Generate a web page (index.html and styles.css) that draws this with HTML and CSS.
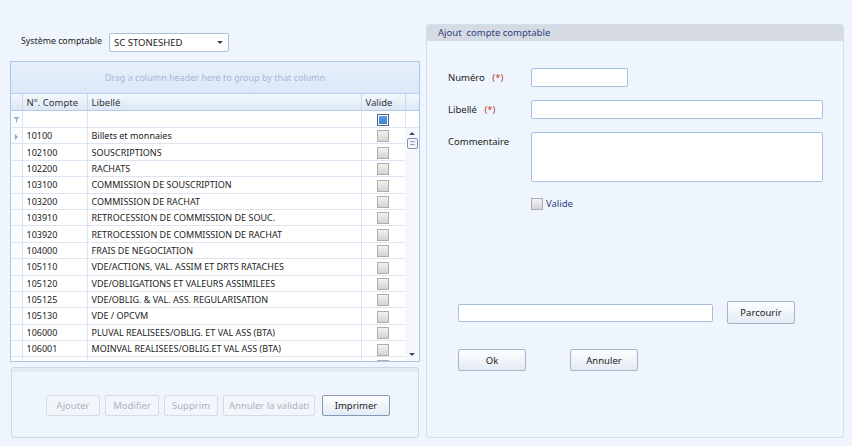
FILE: index.html
```html
<!DOCTYPE html>
<html lang="fr">
<head>
  <meta charset="UTF-8">
  <title>Comptes comptables</title>
  <link rel="stylesheet" href="styles.css">
</head>
<body>
  <div class="page">

    <div class="left">
      <div class="system-row">
        <span class="system-label">Système comptable</span>
        <div class="combo">
          <span>SC STONESHED</span>
          <span class="combo-arrow"></span>
        </div>
      </div>

      <div class="grid">
        <div class="group-panel">Drag a column header here to group by that column</div>

        <table class="grid-table">
          <colgroup>
            <col class="c-ind"><col class="c-num"><col class="c-lib"><col class="c-val"><col class="c-end">
          </colgroup>
          <tr class="head-row">
            <th></th><th>N°. Compte</th><th>Libellé</th><th>Valide</th><th></th>
          </tr>
          <tr class="filter-row">
            <td class="ind">
              <svg width="7" height="7" viewBox="0 0 7 7"><path d="M0.5 1h6L4 3.5V6.5H3V3.5z" fill="#8fa6c4"/></svg>
            </td>
            <td></td><td></td><td class="val"><span class="check check-on"></span></td><td></td>
          </tr>
        </table>

        <div class="grid-body">
          <div class="rows">
            <table class="grid-table">
              <colgroup>
                <col class="c-ind"><col class="c-num"><col class="c-lib"><col class="c-val">
              </colgroup>
              <tr><td class="ind"><span class="current"></span></td><td>10100</td><td>Billets et monnaies</td><td class="val"><span class="check"></span></td></tr>
              <tr><td class="ind"></td><td>102100</td><td>SOUSCRIPTIONS</td><td class="val"><span class="check"></span></td></tr>
              <tr><td class="ind"></td><td>102200</td><td>RACHATS</td><td class="val"><span class="check"></span></td></tr>
              <tr><td class="ind"></td><td>103100</td><td>COMMISSION DE SOUSCRIPTION</td><td class="val"><span class="check"></span></td></tr>
              <tr><td class="ind"></td><td>103200</td><td>COMMISSION DE RACHAT</td><td class="val"><span class="check"></span></td></tr>
              <tr><td class="ind"></td><td>103910</td><td>RETROCESSION DE COMMISSION DE SOUC.</td><td class="val"><span class="check"></span></td></tr>
              <tr><td class="ind"></td><td>103920</td><td>RETROCESSION DE COMMISSION DE RACHAT</td><td class="val"><span class="check"></span></td></tr>
              <tr><td class="ind"></td><td>104000</td><td>FRAIS DE NEGOCIATION</td><td class="val"><span class="check"></span></td></tr>
              <tr><td class="ind"></td><td>105110</td><td>VDE/ACTIONS, VAL. ASSIM ET DRTS RATACHES</td><td class="val"><span class="check"></span></td></tr>
              <tr><td class="ind"></td><td>105120</td><td>VDE/OBLIGATIONS ET VALEURS ASSIMILEES</td><td class="val"><span class="check"></span></td></tr>
              <tr><td class="ind"></td><td>105125</td><td>VDE/OBLIG. &amp; VAL. ASS. REGULARISATION</td><td class="val"><span class="check"></span></td></tr>
              <tr><td class="ind"></td><td>105130</td><td>VDE / OPCVM</td><td class="val"><span class="check"></span></td></tr>
              <tr><td class="ind"></td><td>106000</td><td>PLUVAL REALISEES/OBLIG. ET VAL ASS (BTA)</td><td class="val"><span class="check"></span></td></tr>
              <tr><td class="ind"></td><td>106001</td><td>MOINVAL REALISEES/OBLIG.ET VAL ASS (BTA)</td><td class="val"><span class="check"></span></td></tr>
              <tr><td class="ind"></td><td></td><td></td><td class="val"><span class="check"></span></td></tr>
            </table>
          </div>
          <div class="scrollbar">
            <span class="arrow-up"></span>
            <span class="thumb"></span>
            <span class="spacer"></span>
            <span class="arrow-down"></span>
          </div>
        </div>
      </div>

      <div class="actions">
        <div class="actions-strip"></div>
        <div class="actions-buttons">
          <button class="btn" disabled style="width:54px">Ajouter</button>
          <button class="btn" disabled style="width:54px">Modifier</button>
          <button class="btn" disabled style="width:54px">Supprim</button>
          <button class="btn" disabled style="width:92px">Annuler la validati</button>
          <button class="btn print" style="width:68px">Imprimer</button>
        </div>
      </div>
    </div>

    <div class="editor">
      <div class="editor-title">Ajout&nbsp; compte comptable</div>

      <div class="editor-form">
        <label class="field-label">Numéro <span class="req">(*)</span></label>
        <input type="text" class="text-box short">

        <label class="field-label">Libellé <span class="req">(*)</span></label>
        <input type="text" class="text-box">

        <label class="field-label">Commentaire</label>
        <textarea class="text-box comment"></textarea>

        <span></span>
        <label class="valid-row"><span class="check"></span> Valide</label>
      </div>

      <div class="file-row">
        <input type="text" class="text-box file-box">
        <button class="btn push">Parcourir</button>
      </div>

      <div class="confirm-row">
        <button class="btn push">Ok</button>
        <button class="btn push">Annuler</button>
      </div>
    </div>

  </div>
</body>
</html>
```

FILE: styles.css
```css
body {
  margin: 0;
  background-color: #eef5fd;
  font-family: "Noto Sans", Arial, sans-serif;
  font-size: 9px;
  color: #222;
  height: 446px;
  overflow: hidden;
}

.page {
  display: flex;
  gap: 6px;
  padding-left: 10px;
}

/* ---------- left side ---------- */

.left {
  width: 410px;
  padding-top: 33px;
}

.system-row {
  display: flex;
  align-items: center;
  height: 19px;
  padding-left: 11px;
}

.system-label {
  width: 88px;
  font-size: 8.8px;
  margin-top: -4px;
}

.combo {
  display: flex;
  align-items: center;
  justify-content: space-between;
  box-sizing: border-box;
  width: 120px;
  height: 19px;
  padding: 0 5px 0 4px;
  background-color: #fff;
  border: 1px solid #a9bfdc;
  border-radius: 2px;
  font-size: 9.5px;
}

.combo-arrow {
  width: 0;
  height: 0;
  border-left: 3px solid transparent;
  border-right: 3px solid transparent;
  border-top: 3px solid #444;
}

.grid {
  margin-top: 9px;
  height: 301px;
  box-sizing: border-box;
  border: 1px solid #a9c4e6;
  background-color: #fff;
  overflow: hidden;
}

.group-panel {
  height: 32px;
  box-sizing: border-box;
  border-bottom: 1px solid #b8cfea;
  background: linear-gradient(#e6f0fb, #dbe8f8);
  color: #a4b8d6;
  text-align: center;
  line-height: 31px;
  font-size: 9px;
}

.grid-table {
  width: 408px;
  border-collapse: collapse;
  table-layout: fixed;
}

.c-ind { width: 11px; }
.c-num { width: 65px; }
.c-lib { width: 274px; }
.c-val { width: 44px; }
.c-end { width: 14px; }

.grid-table th,
.grid-table td {
  border-right: 1px solid #dce6f2;
  border-bottom: 1px solid #dce6f2;
  padding: 0 0 0 4px;
  white-space: nowrap;
  overflow: hidden;
  text-align: left;
}

.head-row th {
  height: 16px;
  background: linear-gradient(#f4f8fd, #dbe7f6);
  border-right-color: #c9d9ee;
  border-bottom-color: #b3c9e6;
  font-weight: normal;
  font-size: 9.5px;
  color: #333;
}

.filter-row td {
  height: 16px;
}

.grid-table td.ind {
  padding: 0;
  text-align: center;
  background-color: #fbfcfe;
}

.grid-table td.val {
  padding: 0;
  text-align: center;
}

.grid-body {
  display: flex;
  height: 233px;
}

.rows {
  width: 394px;
  overflow: hidden;
}

.rows .grid-table {
  width: 394px;
}

.rows td {
  height: 15.4px;
}

.current {
  display: inline-block;
  width: 0;
  height: 0;
  border-top: 3px solid transparent;
  border-bottom: 3px solid transparent;
  border-left: 3px solid #8ca3c2;
  vertical-align: middle;
}

.check {
  display: inline-block;
  box-sizing: border-box;
  width: 12px;
  height: 12px;
  border: 1px solid #adadad;
  background: linear-gradient(#f2f2f2, #d4d4d4);
  vertical-align: middle;
}

.check-on {
  border-color: #58667a;
  background: linear-gradient(#5aa6ec, #2f7fd0);
  box-shadow: inset 0 0 0 1px #fff;
}

.scrollbar {
  width: 14px;
  display: flex;
  flex-direction: column;
  align-items: center;
  background-color: #f5f7fa;
}

.arrow-up,
.arrow-down {
  width: 0;
  height: 0;
  border-left: 3px solid transparent;
  border-right: 3px solid transparent;
}

.arrow-up {
  margin-top: 4px;
  border-bottom: 3px solid #3c4c66;
}

.arrow-down {
  margin-bottom: 5px;
  border-top: 3px solid #3c4c66;
}

.thumb {
  margin-top: 3px;
  box-sizing: border-box;
  width: 11px;
  height: 11px;
  border: 1px solid #7f93b2;
  border-radius: 2px;
  background: repeating-linear-gradient(#e9edf3 0 2px, #9aa8bc 2px 3px);
  background-clip: content-box;
  padding: 2px;
  background-color: #e9edf3;
}

.spacer {
  flex: 1;
}

.actions {
  margin: 5px 0 0 1px;
  width: 408px;
  height: 71px;
  box-sizing: border-box;
  border: 1px solid #cad7e8;
  border-radius: 3px;
  background-color: #eff5fd;
  overflow: hidden;
}

.actions-strip {
  height: 4px;
  background-color: #e1eaf5;
}

.actions-buttons {
  display: flex;
  gap: 5px;
  padding: 23px 0 0 34px;
}

.btn {
  height: 21px;
  box-sizing: border-box;
  padding: 0;
  border: 1px solid #a3b4cd;
  border-radius: 2px;
  background: linear-gradient(#fdfeff, #e4ebf4);
  font-family: "Noto Sans", Arial, sans-serif;
  font-size: 9.5px;
  color: #1c1c1c;
  white-space: nowrap;
  overflow: hidden;
}

.btn:disabled {
  border-color: #d3dde9;
  background: #f2f6fb;
  color: #a9b4c2;
}

.btn.print {
  margin-left: 2px;
  border-color: #8698b6;
}

/* ---------- right side ---------- */

.editor {
  margin-top: 24px;
  width: 418px;
  height: 414px;
  box-sizing: border-box;
  border: 1px solid #d4dfec;
  border-radius: 3px;
  background-color: #eff5fd;
  overflow: hidden;
}

.editor-title {
  height: 16px;
  line-height: 16px;
  padding-left: 11px;
  background-color: #d6dae3;
  color: #2f3f84;
  font-size: 9.5px;
}

.editor-form {
  display: grid;
  grid-template-columns: 84px 292px;
  row-gap: 13px;
  align-items: start;
  padding: 27px 0 0 20px;
}

.field-label {
  font-size: 9.5px;
  padding-top: 3px;
  padding-left: 1px;
}

.req {
  color: #c0392b;
  margin-left: 5px;
}

.text-box {
  display: block;
  box-sizing: border-box;
  width: 292px;
  height: 19px;
  margin: 0;
  border: 1px solid #a7bfdf;
  border-radius: 2px;
  background-color: #fff;
  font-family: "Noto Sans", Arial, sans-serif;
}

.text-box.short {
  width: 97px;
}

.text-box.comment {
  height: 50px;
  resize: none;
}

.valid-row {
  display: flex;
  align-items: center;
  gap: 3px;
  margin-top: 2px;
  font-size: 9.5px;
  color: #2f3f84;
}

.file-row {
  display: flex;
  align-items: center;
  gap: 14px;
  margin: 91px 0 0 31px;
}

.file-box {
  width: 255px;
  height: 18px;
}

.btn.push {
  width: 68px;
  height: 23px;
}

.confirm-row {
  display: flex;
  gap: 44px;
  margin: 25px 0 0 31px;
}

.confirm-row .btn.push {
  height: 22px;
}
```
